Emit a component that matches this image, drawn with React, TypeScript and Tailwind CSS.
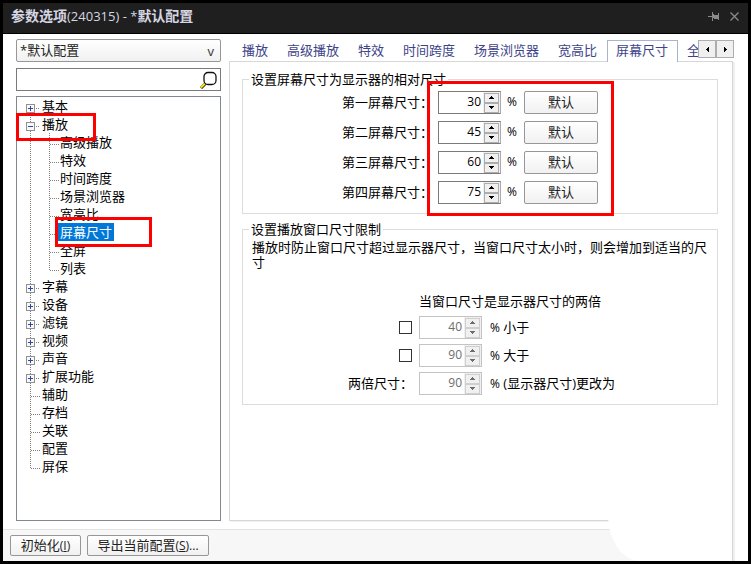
import {useState} from "react";
import {clsx} from "clsx";

type TreeItem = {
    label: string
    open?: boolean
    leaf?: boolean
    children?: string[]
}

const tree: TreeItem[] = [
    {label: "基本"},
    {
        label: "播放",
        open: true,
        children: ["高级播放", "特效", "时间跨度", "场景浏览器", "宽高比", "屏幕尺寸", "全屏", "列表"]
    },
    {label: "字幕"},
    {label: "设备"},
    {label: "滤镜"},
    {label: "视频"},
    {label: "声音"},
    {label: "扩展功能"},
    {label: "辅助", leaf: true},
    {label: "存档", leaf: true},
    {label: "关联", leaf: true},
    {label: "配置", leaf: true},
    {label: "屏保", leaf: true},
]

const tabs = ["播放", "高级播放", "特效", "时间跨度", "场景浏览器", "宽高比", "屏幕尺寸", "全屏"]

const screens = [
    {label: "第一屏幕尺寸：", value: 30},
    {label: "第二屏幕尺寸：", value: 45},
    {label: "第三屏幕尺寸：", value: 60},
    {label: "第四屏幕尺寸：", value: 75},
]

const buttonStyle = "rounded-[2px] border border-[#979797] bg-linear-to-b from-white to-[#f1f1f1] pb-0.5 text-[#222]"

function Highlight({className}: {className: string}) {
    return <div className={clsx("pointer-events-none absolute z-10 border-3 border-[#fe0000]", className)} />
}

function Spinner({id, value, label, disabled}: {id: string; value: number; label?: string; disabled?: boolean}) {
    const [current, setCurrent] = useState(value)

    const stepStyle = clsx("flex h-[10px] w-[15px] items-center justify-center border bg-[#f0f0f0]", {
        "border-[#adadad] text-black": !disabled,
        "border-[#cfcfcf] text-[#6d6d6d]": disabled,
    })

    return (
        <div className={clsx("flex h-[23px] w-[63px] shrink-0 items-center border bg-white", {
            "border-[#7a7a7a] border-r-[#ababab]": !disabled,
            "border-[#c4c4c4]": disabled,
        })}>
            <input
                id={id}
                aria-label={label}
                disabled={disabled}
                value={current}
                onChange={(e) => setCurrent(Number(e.target.value) || 0)}
                className={clsx("h-full w-0 grow bg-transparent pr-0.5 pb-0.5 text-right text-xs outline-none", {
                    "text-black": !disabled,
                    "text-[#6d6d6d]": disabled,
                })}
            />
            <div className="flex h-full flex-col justify-center bg-[#f0f0f0] px-px">
                <button type="button" aria-label="+" disabled={disabled} onClick={() => setCurrent(current + 1)} className={stepStyle}>
                    <svg width="5" height="3" viewBox="0 0 5 3" fill="currentColor" shapeRendering="crispEdges">
                        <path d="M2 0h1v1h1v1h1v1H0V2h1V1h1z" />
                    </svg>
                </button>
                <button type="button" aria-label="-" disabled={disabled} onClick={() => setCurrent(current - 1)} className={stepStyle}>
                    <svg width="5" height="3" viewBox="0 0 5 3" fill="currentColor" shapeRendering="crispEdges">
                        <path d="M0 0h5v1H4v1H3v1H2V2H1V1H0z" />
                    </svg>
                </button>
            </div>
        </div>
    )
}

function Toggle({open, first}: {open?: boolean; first?: boolean}) {
    return (
        <svg width="14" height="18" viewBox="0 0 14 18" shapeRendering="crispEdges">
            <path d={first ? "M4.5 16v2M10 11.5h4" : "M4.5 0v18M10 11.5h4"} stroke="#808080" strokeDasharray="1 1" fill="none" />
            <rect x="0.5" y="7.5" width="8" height="8" fill="#f8f8f8" stroke="#919191" />
            <path d={open ? "M2 11.5h5" : "M2 11.5h5M4.5 9v5"} stroke="#2c4a9c" fill="none" />
        </svg>
    )
}

function Branch({last}: {last?: boolean}) {
    return (
        <svg width="14" height="18" viewBox="0 0 14 18" shapeRendering="crispEdges">
            <path d={last ? "M4.5 0v12M5 11.5h9" : "M4.5 0v18M5 11.5h9"} stroke="#808080" strokeDasharray="1 1" fill="none" />
        </svg>
    )
}

function Tree() {
    const [selected, setSelected] = useState("屏幕尺寸")

    return (
        <ul className="grow border border-[#828790] bg-white pl-[9px] leading-[18px]">
            {tree.map((item, i) => (
                <li key={item.label}>
                    <div className="relative flex h-[18px] items-center">
                        {item.leaf ? <Branch last={i === tree.length - 1} /> : <Toggle open={item.open} first={i === 0} />}
                        <button type="button" className="ml-0.5 h-[18px]">{item.label}</button>
                        {item.open && <Highlight className="-top-0.5 -left-[10px] h-7 w-20" />}
                    </div>
                    {item.children && (
                        <ul>
                            {item.children.map((child, j) => (
                                <li key={child} className="relative flex h-[18px] items-center">
                                    <svg width="19" height="18" viewBox="0 0 19 18" shapeRendering="crispEdges">
                                        <path d="M4.5 0v18" stroke="#808080" strokeDasharray="1 1" />
                                    </svg>
                                    <Branch last={j === item.children!.length - 1} />
                                    <button
                                        type="button"
                                        onClick={() => setSelected(child)}
                                        className={clsx("-ml-px h-[18px] px-0.5", {"bg-[#0078d7] text-white": child === selected})}
                                    >
                                        {child}
                                    </button>
                                    {child === "屏幕尺寸" && <Highlight className="-top-[6px] left-[29px] h-[30px] w-[97px]" />}
                                </li>
                            ))}
                        </ul>
                    )}
                </li>
            ))}
        </ul>
    )
}

function LimitRow({id, value, text, check}: {id: string; value: number; text: string; check?: boolean}) {
    return (
        <div className="flex h-[23px] items-center">
            <div className="flex w-[167px] shrink-0 items-center">
                {check
                    ? <input type="checkbox" aria-label={text} className="ml-[147px] h-[13px] w-[13px] appearance-none border border-[#333] bg-white checked:bg-[#333]" />
                    : <label htmlFor={id} className="ml-24 pb-0.5 whitespace-nowrap">两倍尺寸：</label>}
            </div>
            <Spinner id={id} value={value} label={check ? text : undefined} disabled />
            <span className="ml-2 pb-0.5 whitespace-nowrap"><span className="text-xs">%</span> {text}</span>
        </div>
    )
}

export default function App() {
    const [activeTab, setActiveTab] = useState("屏幕尺寸")

    return (
        <div className="flex min-h-screen flex-col border-3 border-black bg-white font-['Open_Sans','Noto_Sans_CJK_SC',sans-serif] text-[13px] leading-[18px] text-black">
            <header className="flex h-[31px] items-center justify-between border-b border-black bg-[#1f1f1f] pr-[9px] pl-2 text-[#d6d6e2]">
                <h1 className="pb-1 text-sm font-bold whitespace-nowrap">
                    参数选项<span className="text-[13px] font-medium">(240315) - *</span>默认配置
                </h1>
                <div className="flex items-center gap-[10px] pb-1 text-[#8a8a8a]">
                    <button type="button" aria-label="置顶">
                        <svg width="12" height="9" viewBox="0 0 12 9" fill="currentColor" shapeRendering="crispEdges">
                            <path d="M0 4h4v1H0zM4 0h1v9H4zM5 2h1v1h4V1h1v7h-1V7H6v-1H5z" />
                        </svg>
                    </button>
                    <button type="button" aria-label="关闭">
                        <svg width="9" height="9" viewBox="0 0 9 9" stroke="currentColor" strokeWidth="1.3">
                            <path d="M0.5 0.5l8 8M8.5 0.5l-8 8" />
                        </svg>
                    </button>
                </div>
            </header>

            <main className="flex grow pt-[5px] pr-[13px] pb-2 pl-[13px]">
                <aside className="flex w-[205px] shrink-0 flex-col">
                    <div className="relative">
                        <select aria-label="配置" className={clsx("block h-[23px] w-full appearance-none pl-[3px] text-[13px] outline-none", buttonStyle)}>
                            <option>*默认配置</option>
                        </select>
                        <span className="pointer-events-none absolute top-[3px] right-[7px] text-[13px] text-[#333]">v</span>
                    </div>
                    <div className="mt-[6px] flex h-[23px] items-center border border-[#7a7a7a] bg-white pr-[3px]">
                        <input type="text" aria-label="搜索" className="w-0 grow px-1 outline-none" />
                        <svg width="17" height="18" viewBox="0 0 17 18" fill="none">
                            <path d="M1 17l5-5" stroke="#222" strokeWidth="3" />
                            <path d="M1 16.5l4.5-4.5" stroke="#ffe600" strokeWidth="2" />
                            <rect x="4" y="1.5" width="12" height="12" rx="4" fill="white" stroke="#111" strokeWidth="1.3" />
                        </svg>
                    </div>
                    <div className="flex grow flex-col pt-[5px]">
                        <Tree />
                    </div>
                </aside>

                <section className="ml-2 flex min-w-0 grow flex-col">
                    <div className="relative z-[1] -mb-px flex h-[23px] items-end overflow-hidden pl-1 text-[#3d4489]">
                        <div role="tablist" className="flex w-0 grow overflow-hidden">
                            {tabs.map((tab) => (
                                <button
                                    key={tab}
                                    type="button"
                                    role="tab"
                                    aria-selected={tab === activeTab}
                                    onClick={() => setActiveTab(tab)}
                                    className={clsx("h-[22px] shrink-0 border-x border-t pr-[9px] pb-1 pl-2 whitespace-nowrap", {
                                        "border-[#a9b2cf] bg-white": tab === activeTab,
                                        "border-transparent": tab !== activeTab,
                                    })}
                                >
                                    {tab}
                                </button>
                            ))}
                        </div>
                        <div className="mr-px mb-1 flex text-black">
                            <button type="button" aria-label="向左" className="flex h-[18px] w-[18px] items-center justify-center border border-[#adadad] bg-[#f0f0f0]">
                                <svg width="3" height="5" viewBox="0 0 3 5" fill="currentColor" shapeRendering="crispEdges"><path d="M2 0h1v5H2V4H1V3H0V2h1V1h1z" /></svg>
                            </button>
                            <button type="button" aria-label="向右" className="flex h-[18px] w-[18px] items-center justify-center border border-[#adadad] bg-[#f0f0f0]">
                                <svg width="3" height="5" viewBox="0 0 3 5" fill="currentColor" shapeRendering="crispEdges"><path d="M0 0h1v1h1v1h1v1H2v1H1v1H0z" /></svg>
                            </button>
                        </div>
                    </div>

                    <div className="mr-0.5 grow border border-[#d6d7d8] px-3 pt-2 shadow-[2px_1px_0_#f0f0f0]">
                        <fieldset className="relative mr-0.5 border border-[#dcdcdc] pt-[3px] pb-[9px] pl-[6px]">
                            <legend className="px-0.5">设置屏幕尺寸为显示器的相对尺寸</legend>
                            <div className="flex flex-col gap-[7px] pl-[93px]">
                                {screens.map((screen, i) => (
                                    <div key={screen.label} className="flex h-[23px] items-center">
                                        <label htmlFor={`screen-${i}`} className="w-24 shrink-0 pb-px whitespace-nowrap">{screen.label}</label>
                                        <Spinner id={`screen-${i}`} value={screen.value} />
                                        <span className="ml-[6px] w-[17px] pb-px text-xs">%</span>
                                        <button type="button" className={clsx("h-[23px] w-[74px]", buttonStyle)}>默认</button>
                                    </div>
                                ))}
                            </div>
                            <Highlight className="-top-[7px] left-[184px] h-[135px] w-[187px]" />
                        </fieldset>

                        <fieldset className="mt-[6px] mr-0.5 border border-[#dcdcdc] pt-0.5 pb-[9px] pl-[6px]">
                            <legend className="px-0.5">设置播放窗口尺寸限制</legend>
                            <p className="pl-[3px] leading-[15px]">
                                播放时防止窗口尺寸超过显示器尺寸，当窗口尺寸太小时，则会增加到适当的尺寸
                            </p>
                            <p className="mt-[22px] pl-[170px]">当窗口尺寸是显示器尺寸的两倍</p>
                            <div className="mt-[6px] flex flex-col gap-[5px] pl-[3px]">
                                <LimitRow id="limit-less" value={40} text="小于" check />
                                <LimitRow id="limit-more" value={90} text="大于" check />
                                <LimitRow id="limit-double" value={90} text="(显示器尺寸)更改为" />
                            </div>
                        </fieldset>
                    </div>
                </section>
            </main>

            <footer className="relative flex h-8 items-center gap-[6px] border-t border-[#e3e3e3] bg-[#f7f7f7] px-[7px]">
                <button type="button" className={clsx("h-[21px] w-[71px] whitespace-nowrap", buttonStyle)}>
                    初始化<span className="text-xs">(<u>I</u>)</span>
                </button>
                <button type="button" className={clsx("h-[21px] w-[122px] whitespace-nowrap", buttonStyle)}>
                    导出当前配置<span className="text-xs">(<u>S</u>)...</span>
                </button>
                <div className="absolute right-0 bottom-0 h-[46px] w-[140px] rounded-bl-[32px_46px] bg-white pr-[15px]">
                    <div className="h-full border-r border-[#d6d7d8] shadow-[2px_0_0_#f0f0f0]" />
                </div>
            </footer>
        </div>
    );
}
